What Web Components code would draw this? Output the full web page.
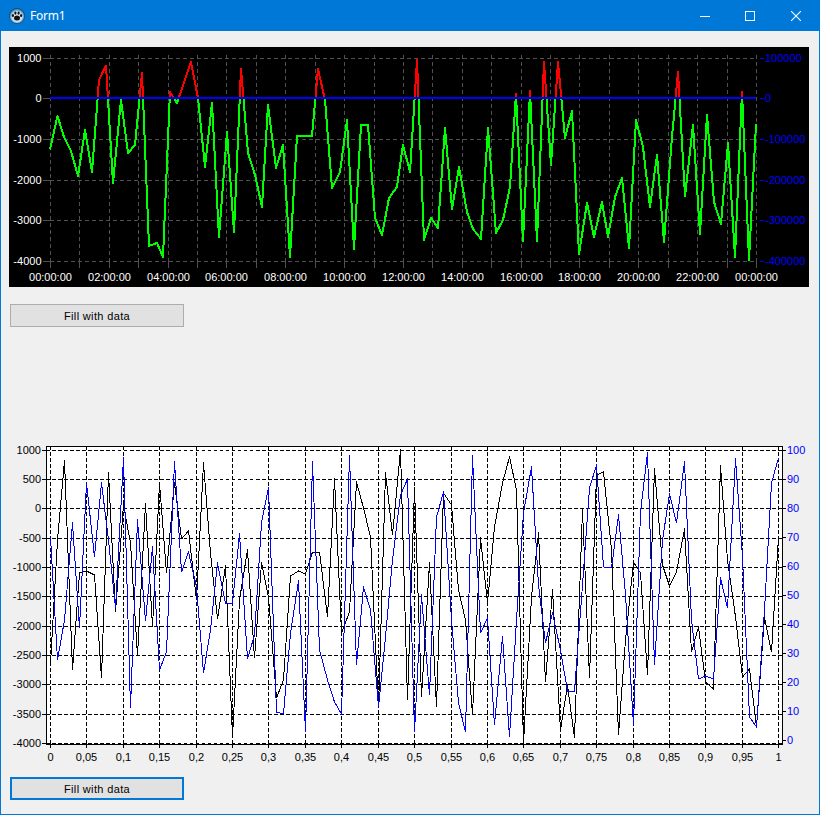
<!DOCTYPE html>
<html>
<head>
<meta charset="utf-8">
<title>Form1</title>
<style>
    html, body { margin: 0; height: 100%; background: #f0f0f0; }
</style>
</head>
<body>
<form-window caption="Form1">
    <chart-view id="top"></chart-view>
    <fill-button>Fill with data</fill-button>
    <chart-view id="bottom"></chart-view>
    <fill-button focused>Fill with data</fill-button>
</form-window>

<script>
const NS = 'http://www.w3.org/2000/svg';

const windowTemplate = document.createElement('template');
windowTemplate.innerHTML = `
<style>
    :host {
        display: flex;
        flex-direction: column;
        box-sizing: border-box;
        width: 820px;
        height: 815px;
        background: #f0f0f0;
        border: 1px solid #0078d7;
        border-top: none;
        overflow: hidden;
    }
    .bar {
        display: flex;
        align-items: center;
        flex: none;
        height: 31px;
        margin: 0 -1px;
        padding-right: 1px;
        background: #0078d7;
        color: #fff;
        font: 12px "Noto Sans", sans-serif;
    }
    .bar svg.ico { margin: 0 5px 0 9px; }
    .name { flex: 1; letter-spacing: -0.2px; }
    .btn {
        width: 46px;
        height: 31px;
        display: flex;
        align-items: center;
        justify-content: center;
    }
    .btn.min svg { margin-left: 2px; }
    .content {
        flex: 1;
        display: flex;
        flex-direction: column;
        align-items: flex-start;
        padding: 16px 0 0 8px;
    }
</style>
<div class="bar">
    <svg class="ico" width="16" height="16" viewBox="0 0 16 16">
        <defs>
            <radialGradient id="g" cx="50%" cy="55%" r="55%">
                <stop offset="0" stop-color="#f4fbff"/>
                <stop offset="0.6" stop-color="#bcdff2"/>
                <stop offset="1" stop-color="#1d5d8f"/>
            </radialGradient>
        </defs>
        <circle cx="8" cy="8" r="7.6" fill="url(#g)" stroke="#123a5c" stroke-width="0.6"/>
        <ellipse cx="8" cy="10" rx="3" ry="2.5" fill="#111"/>
        <ellipse cx="3.9" cy="7.6" rx="1.1" ry="1.5" fill="#111"/>
        <ellipse cx="6.4" cy="5.1" rx="1.1" ry="1.6" fill="#111"/>
        <ellipse cx="9.6" cy="5.1" rx="1.1" ry="1.6" fill="#111"/>
        <ellipse cx="12.1" cy="7.6" rx="1.1" ry="1.5" fill="#111"/>
    </svg>
    <span class="name"></span>
    <div class="btn min"><svg width="10" height="10" viewBox="0 0 10 10"><path d="M0 5.5H10" stroke="#fff" fill="none"/></svg></div>
    <div class="btn"><svg width="10" height="10" viewBox="0 0 10 10"><rect x=".5" y=".5" width="9" height="9" stroke="#fff" fill="none"/></svg></div>
    <div class="btn"><svg width="10" height="10" viewBox="0 0 10 10"><path d="M0 0L10 10M10 0L0 10" stroke="#fff" stroke-width="1.1" fill="none"/></svg></div>
</div>
<div class="content"><slot></slot></div>
`;

class FormWindow extends HTMLElement {
    constructor() {
        super();
        this._shadowRoot = this.attachShadow({ mode: 'open' });
        this._shadowRoot.appendChild(windowTemplate.content.cloneNode(true));
        this._shadowRoot.querySelector('.name').textContent = this.getAttribute('caption');
    }
}
customElements.define('form-window', FormWindow);

const buttonTemplate = document.createElement('template');
buttonTemplate.innerHTML = `
<style>
    :host {
        display: flex;
        align-items: center;
        justify-content: center;
        box-sizing: border-box;
        width: 174px;
        height: 23px;
        margin-left: 1px;
        background: #e1e1e1;
        border: 1px solid #adadad;
        color: #000;
        font: 11px "Liberation Sans", Arial, sans-serif;
        letter-spacing: 0.35px;
    }
    :host([focused]) {
        border: 2px solid #0078d7;
    }
</style>
<slot></slot>
`;

class FillButton extends HTMLElement {
    constructor() {
        super();
        this._shadowRoot = this.attachShadow({ mode: 'open' });
        this._shadowRoot.appendChild(buttonTemplate.content.cloneNode(true));
    }
}
customElements.define('fill-button', FillButton);

const chartTemplate = document.createElement('template');
chartTemplate.innerHTML = `
<style>
    :host { display: block; flex: none; }
    svg { display: block; }
    text { font: 11px "Liberation Sans", Arial, sans-serif; }
    .crisp { shape-rendering: crispEdges; }
</style>
<svg xmlns="http://www.w3.org/2000/svg"></svg>
`;

// draws in page coordinates, the viewBox is shifted to where the element sits
class ChartView extends HTMLElement {
    constructor() {
        super();
        this._shadowRoot = this.attachShadow({ mode: 'open' });
        this._shadowRoot.appendChild(chartTemplate.content.cloneNode(true));
        this.$svg = this._shadowRoot.querySelector('svg');
    }

    add(tag, attrs, text) {
        const el = document.createElementNS(NS, tag);
        for (const k in attrs) el.setAttribute(k, attrs[k]);
        if (text !== undefined) el.textContent = text;
        (attrs.parent || this.$svg).appendChild(el);
        el.removeAttribute('parent');
        return el;
    }

    line(x1, y1, x2, y2, stroke, dash) {
        const a = { x1, y1, x2, y2, stroke, class: 'crisp' };
        if (dash) a['stroke-dasharray'] = dash;
        this.add('line', a);
    }

    poly(points, stroke, width, clip) {
        const a = {
            points: points.map(p => p.join(',')).join(' '),
            fill: 'none', stroke, 'stroke-width': width,
            'stroke-linejoin': 'round', class: 'crisp'
        };
        if (clip) a['clip-path'] = 'url(#' + clip + ')';
        this.add('polyline', a);
    }

    text(x, y, s, fill, anchor) {
        this.add('text', { x, y, fill, 'text-anchor': anchor || 'start' }, s);
    }

    setBox(x, y, w, h, bg) {
        this.style.width = w + 'px';
        this.style.height = h + 'px';
        this.$svg.setAttribute('width', w);
        this.$svg.setAttribute('height', h);
        this.$svg.setAttribute('viewBox', [x, y, w, h].join(' '));
        if (bg) this.$svg.style.background = bg;
    }
}
customElements.define('chart-view', ChartView);

function drawTop(c) {
    c.setBox(9, 47, 800, 240, '#000');
    const data = [[50,149.5],[57.5,116],[64,137],[71,151],[78,176],[85,130],[92,172],[99,80],[106,65.5],[113,183],[121,100],[128,153],[135,145],[142,73],[149,246],[157,243],[163,257],[170,92],[177,103],[191,62],[198,98],[205,167],[212,103],[219,237],[227,132],[234,232],[241,69],[248,153],[255,175],[262,207],[268,105],[276,168],[283,145],[290,257],[297,136],[304,136],[312,136],[318,69],[325,100],[332,188],[340,172],[347,120],[354,249],[361,125],[368,125],[375,218],[382,235],[389,198],[397,187],[403,145],[410,172],[417,60],[424,240],[431,218],[438,228],[445,128],[452,209],[459,167],[467,212],[473,229],[481,239],[488,128],[496,233],[503,220],[510,187],[516,94],[523,241],[530,91],[537,241],[544,62],[551,165],[558,62],[565,138],[572,111],[579,254],[587,203],[594,237],[602,202],[608,237],[615,197],[622,178],[629,248],[636,120],[643,147],[650,207],[657,155],[664,242],[672,137],[678,72],[685,196],[693,125],[700,234],[707,115],[714,202],[721,224],[728,143],[735,257],[742,92],[749,260],[756,124]];
    const ys = [58, 98, 139, 180, 220, 261];
    const left = ['1000', '0', '-1000', '-2000', '-3000', '-4000'];
    const right = ['100000', '0', '-100000', '-200000', '-300000', '-400000'];
    const grid = '#505050';

    const defs = c.add('defs', {});
    const up = c.add('clipPath', { id: 'above', parent: defs });
    c.add('rect', { x: 0, y: 0, width: 820, height: 98, parent: up });
    const down = c.add('clipPath', { id: 'below', parent: defs });
    c.add('rect', { x: 0, y: 98, width: 820, height: 300, parent: down });

    ys.forEach((y, i) => {
        c.line(50, y + .5, 756, y + .5, grid, '4 3');
        c.line(43, y + .5, 50, y + .5, grid);
        c.line(760, y + .5, 764, y + .5, '#0000ff');
        c.text(41.5, y + 4, left[i], '#fff', 'end');
        c.text(765, y + 4, right[i], '#0000ff');
    });
    for (let i = 0; i <= 24; i++) {
        const x = Math.floor(50.4 + 29.42 * i) + .5;
        c.line(x, 55, x, 261, grid, '4 3');
        c.line(x, 261, x, 268, grid);
        if (i % 2 === 0) {
            const h = String(i % 24).padStart(2, '0');
            c.text(x, 281, h + ':00:00', '#fff', 'middle');
        }
    }
    c.poly(data, '#ff0000', 2, 'above');
    c.poly(data, '#00ff00', 2, 'below');
    c.add('rect', { x: 50, y: 97, width: 706, height: 2, fill: '#0000ff', class: 'crisp' });
}

function drawBottom(c) {
    c.setBox(9, 440, 800, 330);
    const black = [664,540,461,670,573,571,575,678,473,612,505,543,656,504,627,483,573,483,539,531,600,463,553,619,566,737,600,550,658,563,597,698,680,576,571,574,552,552,617,479,633,612,482,508,537,708,473,535,450,700,488,697,563,707,493,505,590,620,715,538,603,527,483,457,490,743,597,533,682,590,730,685,738,510,678,475,472,550,735,640,562,573,675,469,565,586,572,529,652,627,682,689,466,560,617,677,669,727,617,652,537];
    const blue = [537,660,620,523,628,483,557,483,540,608,458,708,520,621,547,670,652,462,572,552,587,673,630,563,603,603,534,659,635,523,488,712,714,633,581,732,462,650,680,702,714,456,665,587,610,707,637,560,495,479,732,595,695,517,492,620,703,732,456,633,618,725,637,737,620,513,467,585,643,613,650,691,691,585,488,465,567,568,515,595,725,512,453,665,540,494,523,462,620,679,676,679,578,608,459,557,717,727,610,483,458];
    const left = ['1000', '500', '0', '-500', '-1000', '-1500', '-2000', '-2500', '-3000', '-3500', '-4000'];
    const px = i => Math.floor(50.4 + 7.284 * i) + .5;

    c.add('rect', { x: 46, y: 446, width: 736, height: 298, fill: '#fff' });
    left.forEach((s, i) => {
        const y = Math.floor(450.35 + 29.3 * i);
        const ry = 450 + 29 * i; // the right axis runs a little shorter than the left one
        c.line(46, y + .5, 782, y + .5, '#000', '3.5 2.5');
        c.line(42, y + .5, 46, y + .5, '#000');
        c.line(782, ry + .5, 786, ry + .5, '#000');
        c.text(41, y + 4, s, '#000', 'end');
        c.text(787, ry + 4, String(100 - i * 10), '#0000ff');
    });
    for (let i = 0; i <= 20; i++) {
        const x = px(i * 5);
        c.line(x, 446, x, 744, '#000', '3.5 2.5');
        c.line(x, 744, x, 748, '#000');
        const v = i === 0 ? '0' : i === 20 ? '1' : String(i * 5 / 100).replace('.', ',');
        c.text(x, 761, v, '#000', 'middle');
    }
    c.poly(black.map((y, i) => [px(i), y]), '#000', 1);
    c.poly(blue.map((y, i) => [px(i), y]), '#0000ff', 1);
    c.line(46.5, 446, 46.5, 745, '#000');
    c.line(46, 446.5, 783, 446.5, '#000');
    c.line(782.5, 446, 782.5, 745, '#000');
    c.line(46, 744.5, 783, 744.5, '#000');
}

drawTop(document.getElementById('top'));
drawBottom(document.getElementById('bottom'));

const [first, second] = document.querySelectorAll('fill-button');
first.style.marginTop = '17px';
document.getElementById('bottom').style.marginTop = '113px';
second.style.marginTop = '7px';
</script>
</body>
</html>
